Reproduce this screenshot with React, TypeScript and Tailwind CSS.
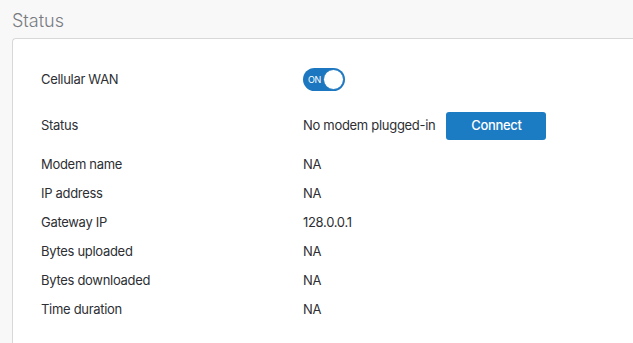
const rows: [string, string][] = [
  ['Modem name', 'NA'],
  ['IP address', 'NA'],
  ['Gateway IP', '128.0.0.1'],
  ['Bytes uploaded', 'NA'],
  ['Bytes downloaded', 'NA'],
  ['Time duration', 'NA'],
];

function Toggle() {
  return (
    <div className="flex h-[23px] w-[42px] items-center justify-between rounded-full bg-[#1c77c0] pl-[5px] pr-[1px]">
      <span className="text-[9px] leading-none text-white">ON</span>
      <span className="h-[21px] w-[21px] rounded-full border border-[#1c77c0] bg-white" />
    </div>
  );
}

export default function App() {
  return (
    <div
      className="h-[343px] w-[633px] overflow-hidden bg-[#f8f8f8] pl-3 text-[13px] text-[#2d2f33]"
      style={{ fontFamily: 'Inter, "Liberation Sans", sans-serif' }}
    >
      <h1 className="pt-[10px] text-[18px] leading-[22px] font-light text-[#787c82]">Status</h1>
      <div className="mt-[6px] h-[340px] rounded-tl-[4px] border-t border-l border-[#d8d8d8] bg-white pt-[29px] pl-[28px] tracking-[-0.3px]">
        <div className="flex h-[23px] items-center">
          <div className="w-[262px]">Cellular WAN</div>
          <Toggle />
        </div>
        <div className="mt-[21px] flex h-[28px] items-center">
          <div className="w-[262px]">Status</div>
          <div>No modem plugged-in</div>
          <button className="ml-[11px] h-[28px] w-[100px] rounded-[3px] bg-[#1b7bc3] font-medium text-white">
            Connect
          </button>
        </div>
        <div className="mt-[10px]">
          {rows.map(([label, value]) => (
            <div key={label} className="flex h-[29px] items-center">
              <div className="w-[262px]">{label}</div>
              <div>{value}</div>
            </div>
          ))}
        </div>
      </div>
    </div>
  );
}
